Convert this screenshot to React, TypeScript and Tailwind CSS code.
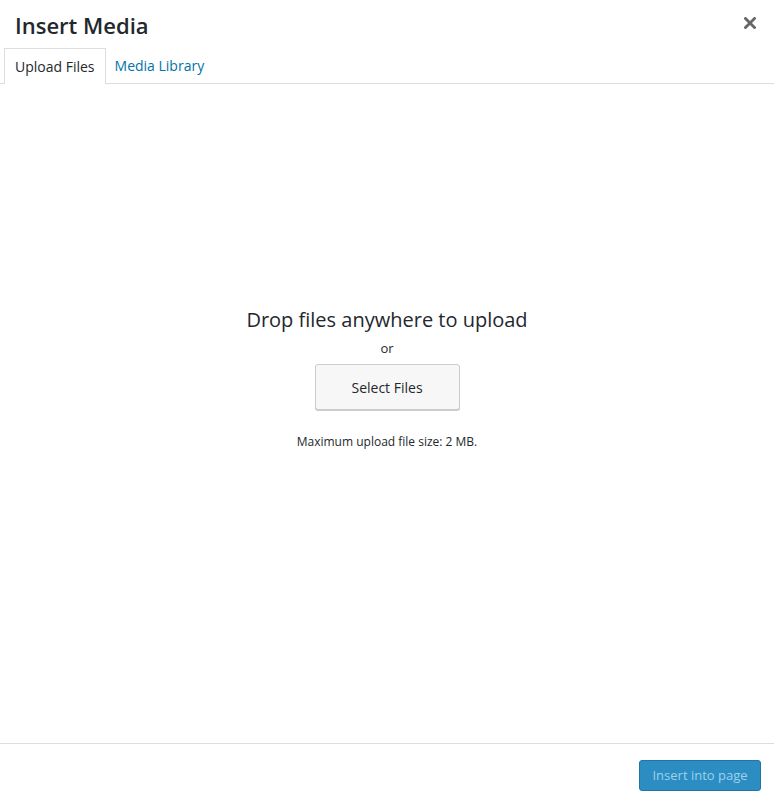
export default function App() {
  return (
    <div
      className="h-[802px] w-[774px] flex flex-col bg-white text-[#23282d]"
      style={{ fontFamily: '"Open Sans", "Noto Sans", sans-serif' }}
    >
      <div className="relative h-[48px]">
        <h1 className="px-[15px] text-[22px] font-semibold leading-[50px] text-[#23282d]">Insert Media</h1>
        <button className="absolute right-[16px] top-[15px] flex h-[16px] w-[16px] items-center justify-center">
          <svg width="12" height="12" viewBox="0 0 12 12">
            <path d="M1.5 1.5 L10.5 10.5 M10.5 1.5 L1.5 10.5" stroke="#666" strokeWidth="2.8" strokeLinecap="square" />
          </svg>
        </button>
      </div>

      <div className="flex h-[36px] border-b border-[#dddddd] pl-[4px]">
        <div className="-mb-px flex h-[36px] items-center border border-b-0 border-[#dddddd] bg-white px-[10px] text-[14px]">
          Upload Files
        </div>
        <div className="flex h-[35px] items-center px-[9px] text-[14px] text-[#0073aa]">Media Library</div>
      </div>

      <div className="flex flex-1 flex-col items-center pt-[222px]">
        <p className="text-[20px] leading-[28px]">Drop files anywhere to upload</p>
        <p className="mt-[4px] text-[13px] leading-[20px]">or</p>
        <button className="mt-[6px] h-[46px] w-[145px] rounded-[3px] border border-[#cccccc] bg-[#f7f7f7] text-[14px] text-[#23282d] shadow-[0_1px_0_#cccccc]">
          Select Files
        </button>
        <p className="mt-[23px] text-[12px] leading-[18px]">Maximum upload file size: 2 MB.</p>
      </div>

      <div className="flex h-[59px] justify-end border-t border-[#dddddd] pr-[13px] pt-[16px]">
        <button className="h-[31px] w-[122px] rounded-[3px] border border-[#1f76a6] bg-[#2b8dc2] text-[13px] text-[#9dd1ec]">
          Insert into page
        </button>
      </div>
    </div>
  );
}
